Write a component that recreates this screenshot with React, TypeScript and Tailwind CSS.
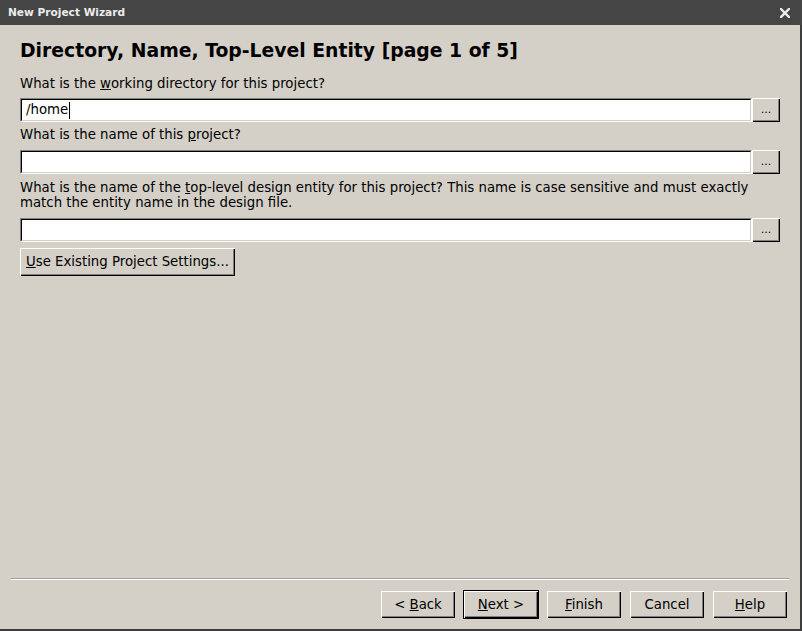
import React from "react";

const font = { fontFamily: '"DejaVu Sans", Verdana, sans-serif' };

function Field({ value, caret }: { value?: string; caret?: boolean }) {
  return (
    <div className="flex h-[24px] items-stretch">
      {/* sunken text box */}
      <div className="flex-1 border-t border-l border-t-[#808080] border-l-[#808080] border-b border-r border-b-white border-r-white">
        <div className="h-full border-t border-l border-t-black border-l-black border-b border-r border-b-[#d4d0c8] border-r-[#d4d0c8] bg-white flex items-center pl-[4px] text-[13.3px] text-black leading-none">
          {value}
          {caret && <span className="inline-block w-px h-[17px] bg-black ml-px" />}
        </div>
      </div>
      <button className="w-[28px] h-[24px] bg-[#d4d0c8] shadow-[inset_1px_1px_0_#fff,inset_-1px_-1px_0_#000,inset_-2px_-2px_0_#808080] text-[11px] text-black leading-none pb-[1px]">
        ...
      </button>
    </div>
  );
}

function Btn({ children, isDefault }: { children: React.ReactNode; isDefault?: boolean }) {
  return (
    <div className={isDefault ? "border border-black" : "border border-transparent"}>
      <button className="w-[74px] h-[27px] bg-[#d4d0c8] shadow-[inset_1px_1px_0_#fff,inset_-1px_-1px_0_#000,inset_-2px_-2px_0_#808080] text-[13.3px] text-black leading-none">
        {children}
      </button>
    </div>
  );
}

export default function App() {
  return (
    <div style={font} className="w-[802px] h-[631px] flex flex-col bg-[#d4d0c8] select-none">
      {/* Title bar */}
      <div className="h-[25px] bg-[#454545] flex items-center justify-between pl-[8px] pr-[12px]">
        <span className="text-[10.6px] font-bold text-[#ececec]">New Project Wizard</span>
        <svg width="10" height="10" viewBox="0 0 10 10">
          <path d="M1 1L9 9M9 1L1 9" stroke="#ececec" strokeWidth="2.4" strokeLinecap="square" />
        </svg>
      </div>

      <div className="flex-1 flex flex-col border-r-2 border-b-2 border-[#3c3c3c]">
        <div className="flex-1 flex flex-col pl-[20px] pr-[20px] pt-[13px]">
          <h1 className="text-[18.8px] font-bold text-black leading-[26px]">
            Directory, Name, Top-Level Entity [page 1 of 5]
          </h1>

          <p className="mt-[12px] text-[13.3px] text-black leading-[16px]">
            What is the <u>w</u>orking directory for this project?
          </p>
          <div className="mt-[6px]">
            <Field value="/home" caret />
          </div>

          <p className="mt-[5px] text-[13.3px] text-black leading-[16px]">
            What is the name of this <u>p</u>roject?
          </p>
          <div className="mt-[7px]">
            <Field />
          </div>

          <p className="mt-[6px] text-[13.3px] text-black leading-[15px] pr-[20px]">
            What is the name of the <u>t</u>op-level design entity for this project? This name is case sensitive and must exactly match the entity name in the design file.
          </p>
          <div className="mt-[8px]">
            <Field />
          </div>

          <div className="mt-[6px]">
            <button className="h-[28px] px-[6px] bg-[#d4d0c8] shadow-[inset_1px_1px_0_#fff,inset_-1px_-1px_0_#000,inset_-2px_-2px_0_#808080] text-[13.3px] text-black leading-none">
              <u>U</u>se Existing Project Settings...
            </button>
          </div>
        </div>

        {/* separator + buttons */}
        <div className="px-[11px]">
          <div className="h-[2px] border-t border-t-[#a0a0a0] border-b border-b-white" />
        </div>
        <div className="flex justify-end gap-[7px] pt-[10px] pb-[10px] pr-[12px]">
          <Btn>&lt; <u>B</u>ack</Btn>
          <Btn isDefault><u>N</u>ext &gt;</Btn>
          <Btn><u>F</u>inish</Btn>
          <Btn>Cancel</Btn>
          <Btn><u>H</u>elp</Btn>
        </div>
      </div>
    </div>
  );
}
